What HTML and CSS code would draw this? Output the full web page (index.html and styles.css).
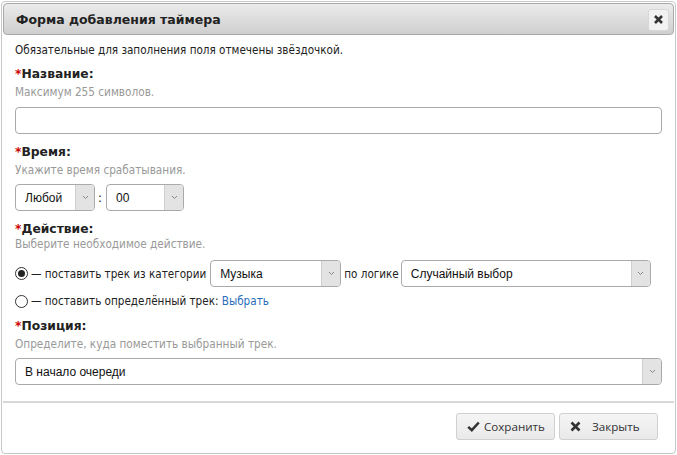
FILE: index.html
```html
<!DOCTYPE html>
<html lang="ru">
<head>
<meta charset="utf-8">
<title>Форма добавления таймера</title>
<link rel="stylesheet" href="styles.css">
</head>
<body>
<div class="dialog">
  <div class="titlebar">
    <span class="title">Форма добавления таймера</span>
    <span class="close-btn">
      <svg width="11" height="11" viewBox="0 0 11 11"><path d="M2 2 L9 9 M9 2 L2 9" stroke="#333" stroke-width="2.6" stroke-linecap="butt"/></svg>
    </span>
  </div>
  <div class="content">
    <p class="note">Обязательные для заполнения поля отмечены звёздочкой.</p>

    <div class="label"><span class="req">*</span>Название:</div>
    <div class="hint">Максимум 255 символов.</div>
    <div class="input"></div>

    <div class="label"><span class="req">*</span>Время:</div>
    <div class="hint">Укажите время срабатывания.</div>
    <div class="row ctl">
      <div class="select sel-hour"><span class="sel-text">Любой</span><span class="sel-arrow"><svg width="7" height="5" viewBox="0 0 7 5"><path d="M1 1 L3.5 3.5 L6 1" fill="none" stroke="#888" stroke-width="1"/></svg></span></div>
      <span class="colon">:</span>
      <div class="select sel-min"><span class="sel-text">00</span><span class="sel-arrow"><svg width="7" height="5" viewBox="0 0 7 5"><path d="M1 1 L3.5 3.5 L6 1" fill="none" stroke="#888" stroke-width="1"/></svg></span></div>
    </div>

    <div class="label"><span class="req">*</span>Действие:</div>
    <div class="hint hint-tight">Выберите необходимое действие.</div>
    <div class="row radio-row">
      <span class="radio checked"></span>
      <span class="rtext">— поставить трек из категории</span>
      <div class="select sel-cat"><span class="sel-text">Музыка</span><span class="sel-arrow"><svg width="7" height="5" viewBox="0 0 7 5"><path d="M1 1 L3.5 3.5 L6 1" fill="none" stroke="#888" stroke-width="1"/></svg></span></div>
      <span class="rtext">по логике</span>
      <div class="select sel-logic"><span class="sel-text">Случайный выбор</span><span class="sel-arrow"><svg width="7" height="5" viewBox="0 0 7 5"><path d="M1 1 L3.5 3.5 L6 1" fill="none" stroke="#888" stroke-width="1"/></svg></span></div>
    </div>
    <div class="row radio-row2">
      <span class="radio"></span>
      <span class="rtext">— поставить определённый трек: <a class="link">Выбрать</a></span>
    </div>

    <div class="label label-pos"><span class="req">*</span>Позиция:</div>
    <div class="hint">Определите, куда поместить выбранный трек.</div>
    <div class="select ctl sel-pos"><span class="sel-text">В начало очереди</span><span class="sel-arrow"><svg width="7" height="5" viewBox="0 0 7 5"><path d="M1 1 L3.5 3.5 L6 1" fill="none" stroke="#888" stroke-width="1"/></svg></span></div>
  </div>
  <div class="footer">
    <span class="btn btn-save"><svg width="13" height="11" viewBox="0 0 13 11"><path d="M1.2 5.8 L4.8 9.2 L11.8 1.5" fill="none" stroke="#333" stroke-width="2.5"/></svg><span>Сохранить</span></span>
    <span class="btn btn-close"><svg width="11" height="11" viewBox="0 0 11 11"><path d="M1.5 1.5 L9.5 9.5 M9.5 1.5 L1.5 9.5" stroke="#333" stroke-width="2.6"/></svg><span>Закрыть</span></span>
  </div>
</div>
</body>
</html>
```
FILE: styles.css
```css
* { box-sizing: border-box; }
html, body { margin: 0; padding: 0; background: #fff; }
body { width: 677px; height: 455px; overflow: hidden; }

.dialog {
  margin: 1px 1px 0 1px;
  height: 453px;
  border: 1px solid #c8c8c8;
  border-radius: 4px;
  padding: 1px;
  font-family: "DejaVu Sans", Verdana, sans-serif;
  color: #222;
  display: flex;
  flex-direction: column;
}

.titlebar {
  height: 32px;
  flex-shrink: 0;
  border: 1px solid #aaa;
  border-radius: 4px;
  background: linear-gradient(#ebebeb, #cfcfcf);
  display: flex;
  align-items: center;
  justify-content: space-between;
  padding: 1px 4px 0 12px;
}
.title { font-weight: bold; font-size: 12.5px; color: #222; }
.close-btn {
  width: 21px; height: 22px;
  border: 1px solid #d8d8d8;
  border-radius: 3px;
  background: #f2f2f2;
  display: flex; align-items: center; justify-content: center;
}

.content { padding: 0 12px; flex: 1; }
.note {
  margin: 7px 0 0;
  font-family: "DejaVu Sans Condensed", "DejaVu Sans", sans-serif;
  font-stretch: condensed;
  font-size: 11.6px;
  line-height: 16px;
}
.label { font-size: 12.3px; font-weight: bold; margin-top: 10px; line-height: 16px; }
.note + .label { margin-top: 8px; }
.req { color: #c00; }
.hint {
  font-family: "DejaVu Sans Condensed", "DejaVu Sans", sans-serif;
  font-stretch: condensed;
  font-size: 11.7px;
  color: #999;
  line-height: 16px;
  margin-top: 2px;
}
.hint-tight { margin-top: -1px; }

.input {
  margin-top: 7px;
  height: 27px;
  border: 1px solid #aaa;
  border-radius: 4px;
  background: #fff;
}

.row { display: flex; align-items: center; }
.ctl { margin-top: 6px; }

.select {
  height: 27px;
  flex-shrink: 0;
  border: 1px solid #aaa;
  border-radius: 4px;
  background: #fff;
  display: flex;
  align-items: stretch;
  justify-content: space-between;
  font-family: "Liberation Sans", Arial, sans-serif;
  font-size: 12px;
  color: #111;
  overflow: hidden;
}
.sel-text { display: flex; align-items: center; padding-left: 9px; }
.sel-arrow {
  width: 19px;
  background: #e3e3e3;
  border-left: 1px solid #cfcfcf;
  display: flex; align-items: center; justify-content: center;
}
.sel-hour { width: 80px; }
.sel-min { width: 78px; }
.colon { margin: 0 4px 0 3px; font-size: 12px; }

.radio-row { margin-top: 8px; }
.radio-row2 { margin-top: 2px; height: 24px; }
.radio {
  width: 13px; height: 13px;
  flex-shrink: 0;
  border: 1px solid #333;
  border-radius: 50%;
  margin-right: 3px;
  display: flex; align-items: center; justify-content: center;
}
.radio.checked::after {
  content: "";
  width: 7px; height: 7px;
  border-radius: 50%;
  background: #222;
}
.rtext {
  font-family: "DejaVu Sans Condensed", "DejaVu Sans", sans-serif;
  font-stretch: condensed;
  font-size: 11.6px;
  white-space: nowrap;
}
.link { color: #2a6ebb; }
.sel-cat { width: 131px; margin: 0 3px 0 4px; }
.sel-logic { width: 250px; margin-left: 2px; }
.sel-pos { width: 647px; }
.label-pos { margin-top: 5px; }

.footer {
  flex-shrink: 0;
  border-top: 2px solid #d8d8d8;
  height: 51px;
  display: flex;
  justify-content: flex-end;
  align-items: flex-start;
  gap: 4px;
  padding: 10px 16px 0 0;
}
.btn {
  height: 27px;
  border: 1px solid #d0d0d0;
  border-radius: 3px;
  background: linear-gradient(#f5f5f5, #e9e9e9);
  display: flex; align-items: center;
  font-family: "Open Sans", sans-serif;
  font-size: 11.6px;
  color: #333;
  white-space: nowrap;
}
.btn svg { flex-shrink: 0; }
.btn-save { width: 99px; padding-left: 10px; }
.btn-save svg { margin-right: 4px; }
.btn-close { width: 99px; padding-left: 10px; }
.btn-close svg { margin-right: 11px; }
```
